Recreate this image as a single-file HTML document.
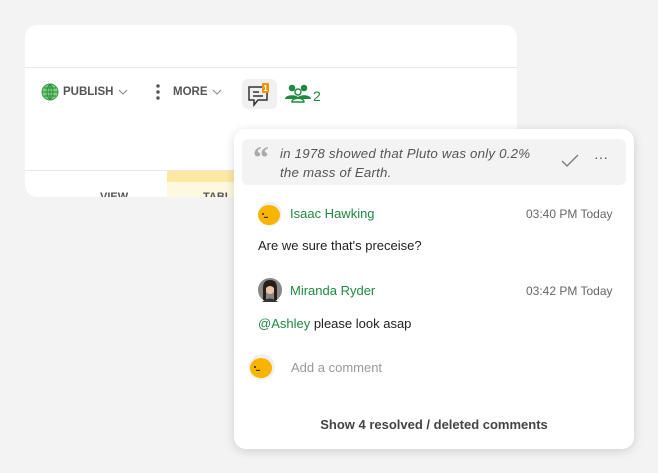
<!DOCTYPE html>
<html><head><meta charset="utf-8"><style>
*{margin:0;padding:0;box-sizing:border-box}
body{width:658px;height:473px;background:#f3f3f3;font-family:"Liberation Sans",sans-serif;position:relative;overflow:hidden}
.card{position:absolute;left:25px;top:25px;width:492px;height:172px;background:#fff;border-radius:12px;overflow:hidden}
.abs{position:absolute}
.tb{font-size:11.5px;font-weight:bold;color:#555;}
.pop{position:absolute;left:234px;top:129px;width:400px;height:320px;background:#fff;border-radius:12px;box-shadow:0 2px 10px rgba(0,0,0,.15)}
.green{color:#1e8a3e}
.t{font-size:12px;color:#666}
</style></head><body>
<div class="card">
 <div class="abs" style="left:0;top:42px;width:492px;height:1px;background:#e8e8e8"></div>
 <svg class="abs" style="left:16px;top:58px" width="18" height="18" viewBox="0 0 18 18"><circle cx="9" cy="9" r="8" fill="#7ccf7f" stroke="#3aa14a"/><path d="M1 9h16M9 1v16M3 5h12M3 13h12M9 1c-4 4-4 12 0 16M9 1c4 4 4 12 0 16" stroke="#2b8a3a" fill="none" stroke-width=".9"/></svg>
 <div class="abs tb" style="left:38px;top:61px">PUBLISH</div>
 <svg class="abs" style="left:93px;top:64px" width="10" height="7"><path d="M1 1l4 4 4-4" stroke="#888" fill="none"/></svg>
 <svg class="abs" style="left:131px;top:59px" width="4" height="16"><circle cx="2" cy="2" r="1.7" fill="#555"/><circle cx="2" cy="8" r="1.7" fill="#555"/><circle cx="2" cy="14" r="1.7" fill="#555"/></svg>
 <div class="abs tb" style="left:148px;top:61px">MORE</div>
 <svg class="abs" style="left:187px;top:64px" width="10" height="7"><path d="M1 1l4 4 4-4" stroke="#888" fill="none"/></svg>
 <div class="abs" style="left:217px;top:54px;width:35px;height:30px;background:#f0f0f0;border-radius:6px"></div>
 <svg class="abs" style="left:222px;top:57px" width="26" height="26" viewBox="0 0 26 26"><path d="M2 5h18v13h-9l-4 5v-5H2z" fill="none" stroke="#333" stroke-width="1.5"/><path d="M6 10h6M6 14h10" stroke="#333" stroke-width="1.5"/><rect x="15" y="1" width="7" height="10" rx="1" fill="#f39200"/><text x="18.5" y="9" font-size="8" fill="#fff" text-anchor="middle" font-family="Liberation Sans" font-weight="bold">1</text></svg>
 <svg class="abs" style="left:260px;top:58px" width="26" height="20" viewBox="0 0 26 20"><circle cx="7" cy="5" r="3.3" fill="#1e8a3e"/><circle cx="19" cy="5" r="3.3" fill="#1e8a3e"/><path d="M0 16c0-5 14-5 14 0zM12 16c0-5 14-5 14 0z" fill="#1e8a3e"/><circle cx="13" cy="9" r="3" fill="#fff" stroke="#1e8a3e" stroke-width="1.4"/><path d="M7 19c0-5 12-5 12 0z" fill="#fff" stroke="#1e8a3e" stroke-width="1.4"/></svg>
 <div class="abs green" style="left:288px;top:63px;font-size:14px">2</div>
 <div class="abs" style="left:0;top:145px;width:492px;height:1px;background:#e8e8e8"></div>
 <div class="abs" style="left:142px;top:146px;width:70px;height:11px;background:#fde9a3"></div>
 <div class="abs" style="left:142px;top:157px;width:70px;height:20px;background:#fdf8e0"></div>
 <div class="abs tb" style="left:75px;top:166px;font-size:11px">VIEW</div>
 <div class="abs tb" style="left:178px;top:166px;font-size:11px">TABL</div>
</div>
<div class="pop">
 <div class="abs" style="left:8px;top:10px;width:384px;height:46px;background:#f3f3f3;border-radius:6px"></div>
 <div class="abs" style="left:19px;top:10px;font-size:32px;color:#aaa;font-family:'Liberation Serif',serif;font-weight:bold">“</div>
 <div class="abs" style="left:46px;top:15px;font-size:13.3px;color:#555;font-style:italic;line-height:19px;letter-spacing:.2px">in 1978 showed that Pluto was only 0.2%<br>the mass of Earth.</div>
 <svg class="abs" style="left:327px;top:25px" width="18" height="14"><path d="M1 7l5 5L17 1" stroke="#777" fill="none" stroke-width="1.3"/></svg>
 <div class="abs" style="left:360px;top:20px;font-size:14px;color:#555">···</div>
 <svg class="abs" style="left:24px;top:73px" width="24" height="24"><circle cx="12" cy="12" r="12" fill="#f0f0f0"/><ellipse cx="11" cy="13" rx="11" ry="10" fill="#f7b500"/><circle cx="5" cy="12" r="1" fill="#222"/><path d="M6 15q2 1 4 0" stroke="#222" fill="none"/></svg>
 <div class="abs green" style="left:56px;top:77px;font-size:13px">Isaac Hawking</div>
 <div class="abs t" style="left:292px;top:78px">03:40 PM Today</div>
 <div class="abs" style="left:24px;top:109px;font-size:13px;color:#222">Are we sure that's preceise?</div>
 <svg class="abs" style="left:24px;top:149px" width="24" height="24"><circle cx="12" cy="12" r="12" fill="#888"/><ellipse cx="12" cy="10" rx="5" ry="6" fill="#e8c4a8"/><path d="M5 10q0-8 7-8t7 8v12h-3V10q-4-4-8 0v12H5z" fill="#2a1d18"/><path d="M4 24q8-7 16 0z" fill="#333"/></svg>
 <div class="abs green" style="left:56px;top:154px;font-size:13px">Miranda Ryder</div>
 <div class="abs t" style="left:292px;top:155px">03:42 PM Today</div>
 <div class="abs" style="left:24px;top:187px;font-size:13px;color:#222"><span class="green">@Ashley</span> please look asap</div>
 <svg class="abs" style="left:15px;top:225px" width="26" height="26"><circle cx="13" cy="13" r="13" fill="#f0f0f0"/><ellipse cx="12" cy="14" rx="11" ry="10" fill="#f7b500"/><circle cx="6" cy="13" r="1" fill="#222"/><path d="M7 16q2 1 4 0" stroke="#222" fill="none"/></svg>
 <div class="abs" style="left:57px;top:231px;font-size:13px;color:#999">Add a comment</div>
 <div class="abs" style="left:0;top:288px;width:400px;text-align:center;font-size:13px;font-weight:bold;color:#444">Show 4 resolved / deleted comments</div>
</div>
</body></html>
